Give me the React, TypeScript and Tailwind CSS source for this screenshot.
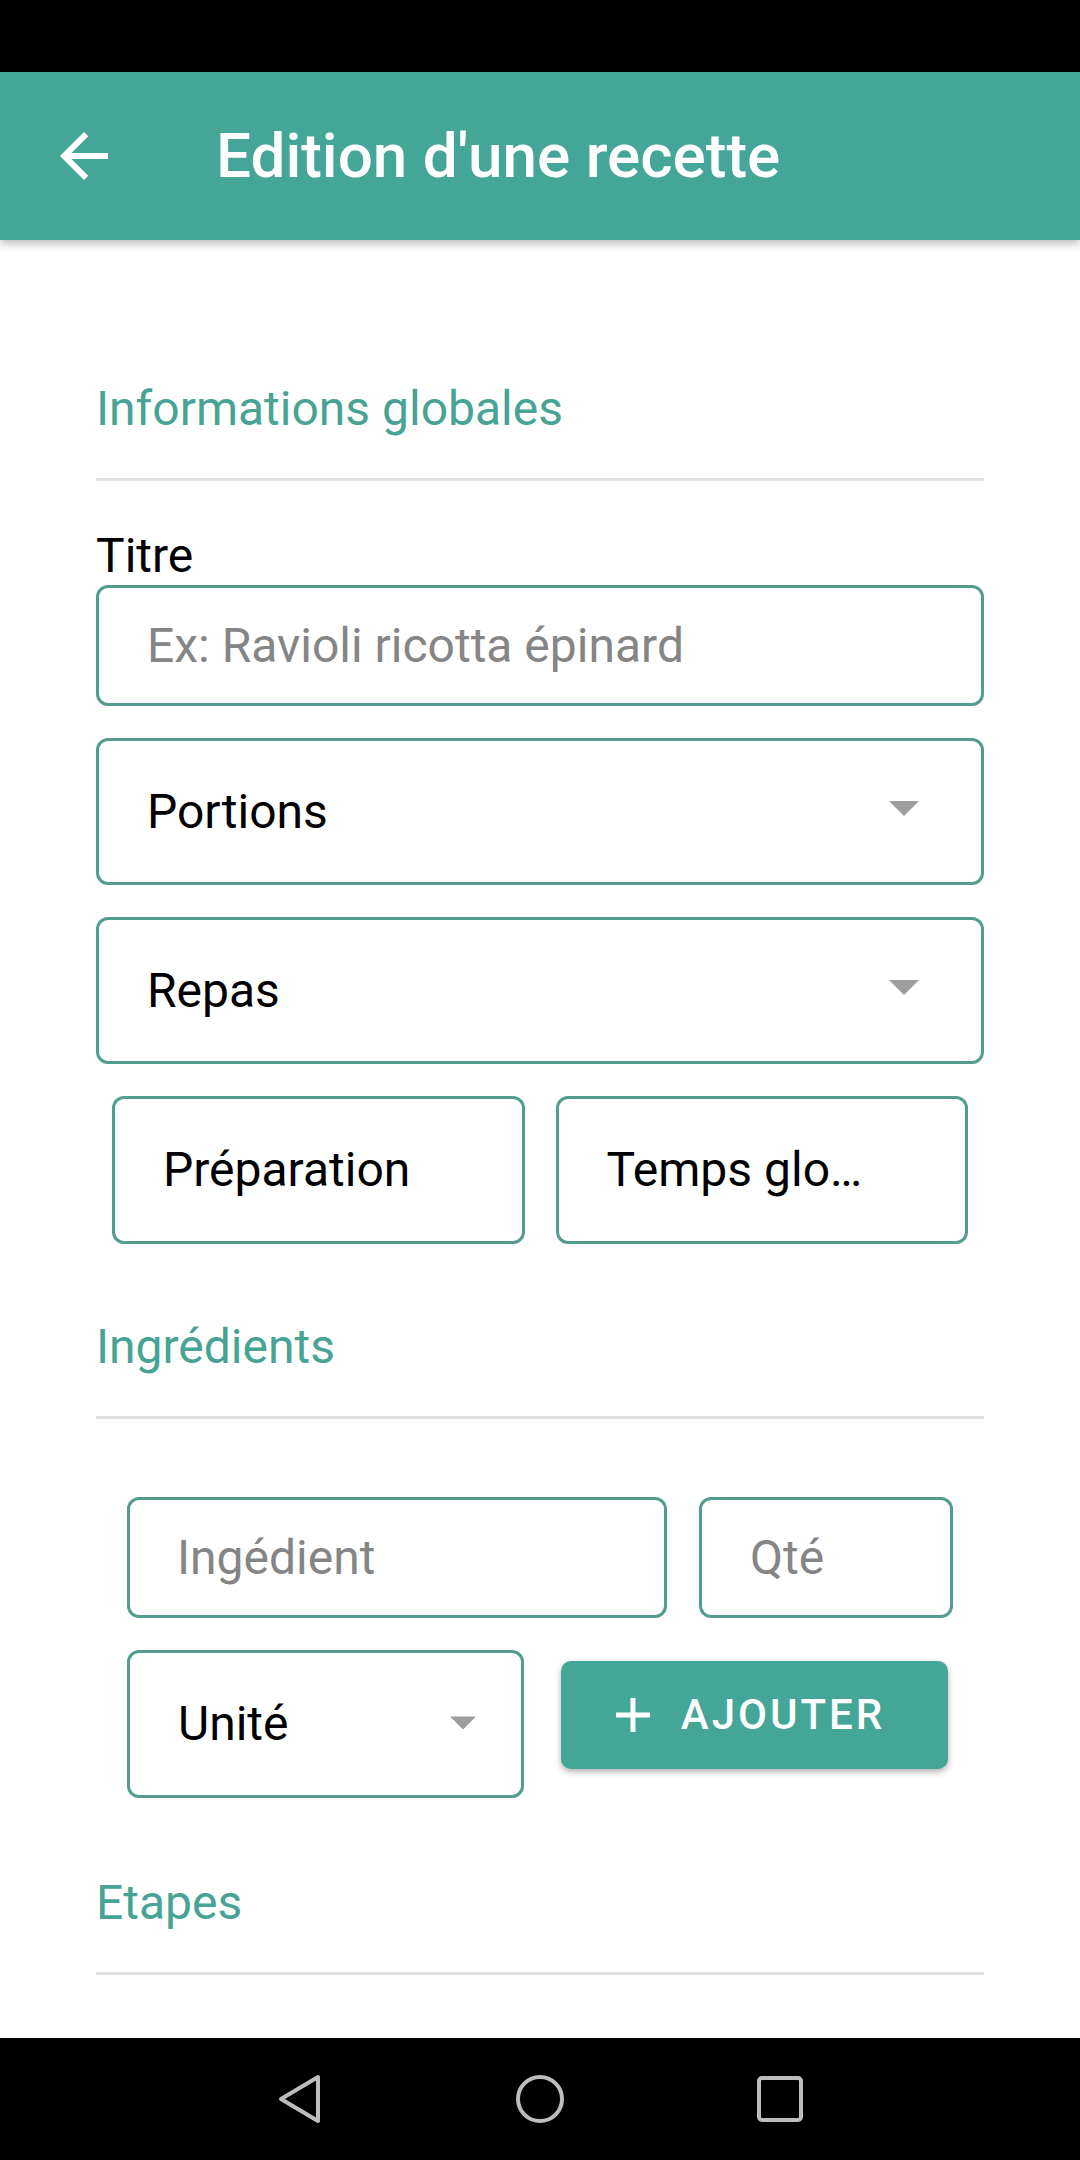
import React from 'react';

const Caret = ({ className }: { className?: string }) => (
  <svg viewBox="0 0 30 15" className={className}>
    <polygon points="0,0 30,0 15,15" fill="#9e9e9e" />
  </svg>
);

const SectionTitle = ({ label, mt }: { label: string; mt: string }) => (
  <div className={mt}>
    <div className="text-[48px] leading-[56px] text-[#47a394]">{label}</div>
    <div className="mt-[41px] h-[3px] bg-[#e0e0e0]" />
  </div>
);

const box = 'border-[3px] border-[#529c90] rounded-[12px] bg-white flex items-center';

const App = () => {
  return (
    <div className="w-[1080px] h-[2160px] flex flex-col bg-white font-['Roboto',sans-serif] overflow-hidden">
      {/* status bar */}
      <div className="h-[72px] bg-black shrink-0" />

      {/* app bar */}
      <div className="h-[168px] shrink-0 bg-[#43a697] flex items-center relative z-10 shadow-[0_4px_8px_rgba(0,0,0,0.25)]">
        <svg viewBox="0 0 24 24" className="ml-[48px] w-[72px] h-[72px]">
          <path d="M20 11H7.83l5.59-5.59L12 4l-8 8 8 8 1.41-1.41L7.83 13H20v-2z" fill="#ffffff" />
        </svg>
        <h1 className="ml-[96px] text-[62px] leading-[62px] font-medium text-white">Edition d'une recette</h1>
      </div>

      {/* form */}
      <div className="flex-1 px-[96px] flex flex-col">
        <SectionTitle label="Informations globales" mt="mt-[141px]" />

        <div className="mt-[47px] text-[48px] leading-[56px] text-black">Titre</div>
        <div className={`${box} mt-[1px] h-[121px] pl-[48px]`}>
          <span className="text-[48px] text-[#858585]">Ex: Ravioli ricotta épinard</span>
        </div>

        <div className={`${box} mt-[32px] h-[147px] pl-[48px] pr-[62px] justify-between`}>
          <span className="text-[48px] text-black">Portions</span>
          <Caret className="w-[30px] h-[15px] -mt-[6px]" />
        </div>

        <div className={`${box} mt-[32px] h-[147px] pl-[48px] pr-[62px] justify-between`}>
          <span className="text-[48px] text-black">Repas</span>
          <Caret className="w-[30px] h-[15px] -mt-[6px]" />
        </div>

        <div className="mt-[32px] mx-[16px] flex gap-[31px]">
          <div className={`${box} flex-1 h-[148px] pl-[48px]`}>
            <span className="text-[48px] text-black">Préparation</span>
          </div>
          <div className={`${box} flex-1 h-[148px] pl-[48px]`}>
            <span className="text-[48px] text-black">Temps glo…</span>
          </div>
        </div>

        <SectionTitle label="Ingrédients" mt="mt-[75px]" />

        <div className="mt-[78px] ml-[31px] flex gap-[32px]">
          <div className={`${box} w-[540px] h-[121px] pl-[47px]`}>
            <span className="text-[48px] text-[#858585]">Ingédient</span>
          </div>
          <div className={`${box} w-[254px] h-[121px] pl-[48px]`}>
            <span className="text-[48px] text-[#858585]">Qté</span>
          </div>
        </div>

        <div className="mt-[32px] ml-[31px] flex items-start gap-[37px]">
          <div className={`${box} w-[397px] h-[148px] pl-[48px] pr-[45px] justify-between`}>
            <span className="text-[48px] text-black">Unité</span>
            <Caret className="w-[26px] h-[14px] -mt-[2px]" />
          </div>
          <button className="mt-[11px] w-[387px] h-[108px] rounded-[10px] bg-[#43a697] shadow-[0_3px_6px_rgba(0,0,0,0.3)] flex items-center justify-center gap-[29px] pr-[10px]">
            <svg viewBox="0 0 38 38" className="w-[38px] h-[38px]">
              <path d="M19 2V36M2 19H36" stroke="#ffffff" strokeWidth="5" />
            </svg>
            <span className="text-[42px] leading-[42px] font-medium tracking-[3px] text-white">AJOUTER</span>
          </button>
        </div>

        <SectionTitle label="Etapes" mt="mt-[77px]" />
      </div>

      {/* nav bar */}
      <div className="h-[122px] shrink-0 bg-black flex justify-center items-center">
        <div className="w-[240px] flex justify-center">
          <svg viewBox="0 0 46 52" className="w-[46px] h-[52px]">
            <path d="M41 4 L4 26 L41 48 Z" fill="none" stroke="#bdbdbd" strokeWidth="4" strokeLinejoin="round" />
          </svg>
        </div>
        <div className="w-[240px] flex justify-center">
          <svg viewBox="0 0 52 52" className="w-[52px] h-[52px]">
            <circle cx="26" cy="26" r="22" fill="none" stroke="#bdbdbd" strokeWidth="4" />
          </svg>
        </div>
        <div className="w-[240px] flex justify-center">
          <svg viewBox="0 0 48 48" className="w-[48px] h-[48px]">
            <rect x="3" y="3" width="42" height="42" rx="3" fill="none" stroke="#bdbdbd" strokeWidth="4" />
          </svg>
        </div>
      </div>
    </div>
  );
};

export default App;
